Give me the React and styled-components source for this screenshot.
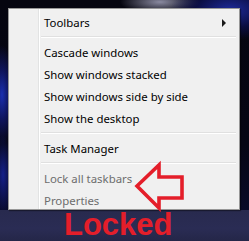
import React from "react";
import styled, { createGlobalStyle } from "styled-components";

const Global = createGlobalStyle`
  html, body {
    margin: 0;
    padding: 0;
    width: 249px;
    height: 241px;
    overflow: hidden;
    background: #000;
  }
  #root {
    width: 249px;
    height: 241px;
  }
`;

const Desktop = styled.div`
  position: relative;
  width: 249px;
  height: 241px;
  display: flex;
  flex-direction: column;
  background:
    radial-gradient(ellipse 14px 50px at 2px 95px, #1a2fb0 0%, rgba(20, 30, 140, 0.6) 50%, transparent 100%),
    radial-gradient(ellipse 10px 40px at 3px 175px, #14208a 0%, transparent 100%),
    radial-gradient(ellipse 60px 30px at 230px 10px, #1d2a9a 0%, rgba(15, 20, 110, 0.5) 60%, transparent 100%),
    radial-gradient(ellipse 40px 12px at 160px 2px, #8a8aa0 0%, transparent 100%),
    linear-gradient(180deg, #05050f 0%, #060614 60%, #0a0c30 100%);
  font-family: "Segoe UI", "Noto Sans", "Open Sans", sans-serif;
`;

const Screen = styled.div`
  flex: 1;
  padding: 8px 8px 0 8px;
  display: flex;
`;

const Menu = styled.div`
  width: 232px;
  height: 202px;
  box-sizing: border-box;
  background: #f0f0f0;
  border: 1px solid #979797;
  padding: 2px 1px 1px 1px;
  position: relative;
  z-index: 1;
  box-shadow: 1px 1px 1px rgba(0, 0, 0, 0.4);
  background-image: linear-gradient(90deg, transparent 29px, #e2e3e3 29px, #e2e3e3 30px, #ffffff 30px, #ffffff 31px, transparent 31px);
`;

const Item = styled.div`
  height: 22px;
  display: flex;
  align-items: center;
  padding-left: 34px;
  padding-right: 10px;
  padding-top: 1px;
  box-sizing: border-box;
  font-size: 11.4px;
  color: ${(p) => (p.disabled ? "#6d6d6d" : "#000")};
  white-space: nowrap;
`;

const Label = styled.span`
  flex: 1;
`;

const Arrow = styled.span`
  width: 0;
  height: 0;
  border-top: 4px solid transparent;
  border-bottom: 4px solid transparent;
  border-left: 4px solid #1a1a1a;
  margin-right: 2px;
`;

const Separator = styled.div`
  height: 1px;
  margin: 3px 2px 3px 31px;
  background: #e0e0e0;
  border-bottom: 1px solid #ffffff;
`;

const Taskbar = styled.div`
  height: 31px;
  background: linear-gradient(180deg, #282a4e 0%, #2a2c54 60%, #242648 100%);
  display: flex;
  align-items: flex-end;
  padding-left: 64px;
`;

const Locked = styled.div`
  font-family: "Liberation Sans", Arial, sans-serif;
  font-weight: bold;
  font-size: 31px;
  line-height: 31px;
  color: #e41e2a;
  margin-bottom: 1px;
  position: relative;
  z-index: 2;
  margin-top: -4px;
`;

const Pointer = styled.svg`
  position: absolute;
  left: 0;
  top: 0;
  z-index: 3;
  pointer-events: none;
`;

export default function App() {
  return (
    <>
      <Global />
      <Desktop>
        <Screen>
          <Menu>
            <Item>
              <Label>Toolbars</Label>
              <Arrow />
            </Item>
            <Separator />
            <Item>Cascade windows</Item>
            <Item>Show windows stacked</Item>
            <Item>Show windows side by side</Item>
            <Item>Show the desktop</Item>
            <Separator />
            <Item>Task Manager</Item>
            <Separator />
            <Item disabled>Lock all taskbars</Item>
            <Item disabled>Properties</Item>
          </Menu>
        </Screen>
        <Taskbar>
          <Locked>Locked</Locked>
        </Taskbar>
        <Pointer width="249" height="241" viewBox="0 0 249 241">
          <polygon
            points="137,186 159,165 159,177 182,177 182,198 159,198 159,208"
            fill="none"
            stroke="#e41e2a"
            strokeWidth="3.6"
            strokeLinejoin="miter"
          />
        </Pointer>
      </Desktop>
    </>
  );
}
